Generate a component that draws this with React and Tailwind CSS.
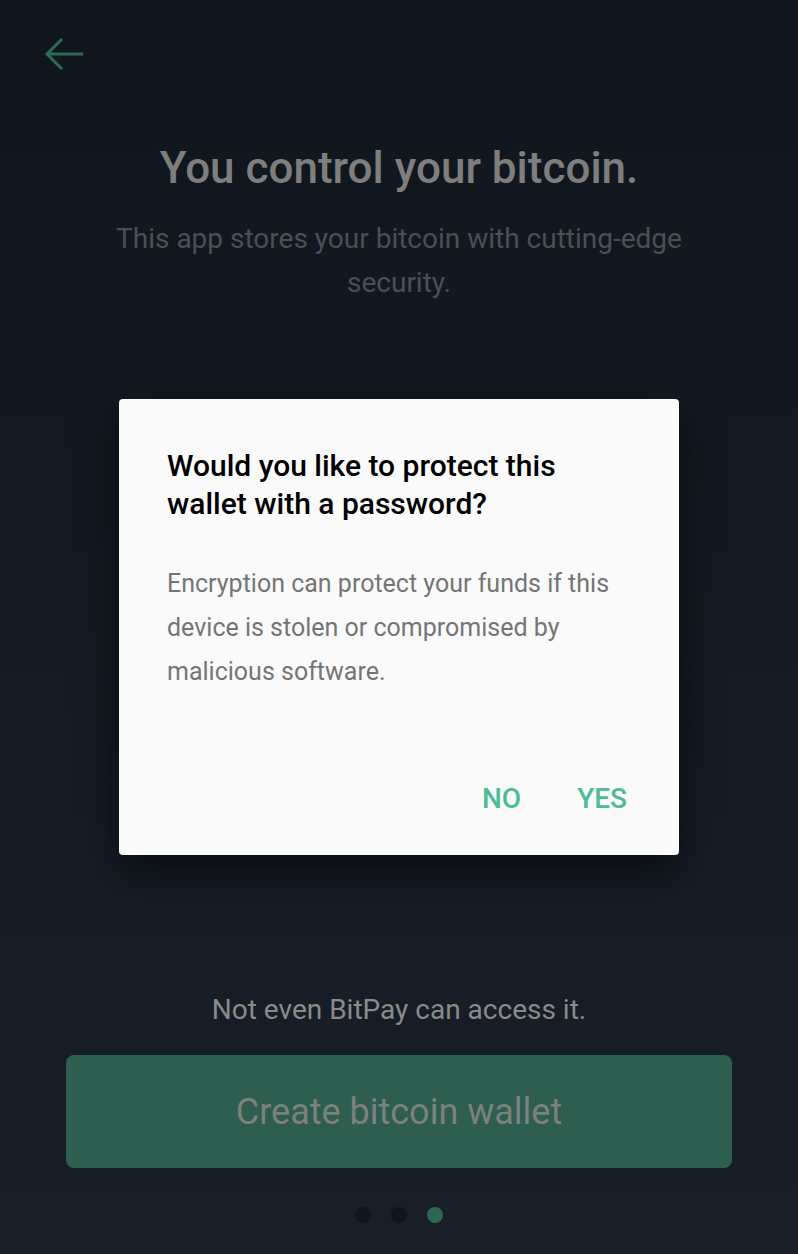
import React from 'react';

export default function App() {
  return (
    <div className="relative w-full h-[1254px] overflow-hidden bg-gradient-to-b from-[#10161e] to-[#181f29] font-['Roboto','Liberation_Sans',sans-serif]">
      <div className="flex flex-col h-full">
        {/* Back arrow */}
        <div className="pt-[37px] pl-[43px]">
          <svg width="42" height="34" viewBox="0 0 42 34" fill="none" stroke="#2d6a55" strokeWidth="3">
            <path d="M40 17H4" />
            <path d="M19 2L4 17l15 15" />
          </svg>
        </div>

        {/* Headline */}
        <h1 className="mt-[71px] text-center text-[44px] leading-[52px] font-medium text-[#7e7e7e]">
          You control your bitcoin.
        </h1>
        <p className="mt-[23px] mx-auto w-[600px] text-center text-[28px] leading-[44px] text-[#4a4f56]">
          This app stores your bitcoin with cutting-edge security.
        </p>

        {/* Bottom area */}
        <div className="mt-auto flex flex-col items-center pb-[31px]">
          <p className="text-[28px] leading-[36px] text-[#8a8a8a]">Not even BitPay can access it.</p>
          <button className="mt-[27px] w-[666px] h-[113px] rounded-lg bg-[#2d5e4f] text-[36px] text-[#7b817e]">
            Create bitcoin wallet
          </button>
          <div className="mt-[39px] flex items-center gap-5">
            <span className="w-4 h-4 rounded-full bg-[#11161e]" />
            <span className="w-4 h-4 rounded-full bg-[#11161e]" />
            <span className="w-4 h-4 rounded-full bg-[#2e6653]" />
          </div>
        </div>
      </div>

      {/* Dialog */}
      <div className="absolute left-[119px] top-[399px] w-[560px] h-[456px] rounded bg-[#fafafa] shadow-[0_18px_40px_rgba(0,0,0,0.55)] flex flex-col">
        <div className="px-12 pt-12">
          <h2 className="text-[30px] leading-[38px] font-medium text-black">
            Would you like to protect this wallet with a password?
          </h2>
          <p className="mt-[39px] text-[25px] leading-[44px] text-[#757575]">
            Encryption can protect your funds if this device is stolen or compromised by malicious software.
          </p>
        </div>
        <div className="mt-auto flex justify-end gap-6 pr-9 pb-8">
          <button className="h-12 px-4 text-[28px] font-medium text-[#4cbb98]">NO</button>
          <button className="h-12 px-4 text-[28px] font-medium text-[#4cbb98]">YES</button>
        </div>
      </div>
    </div>
  );
}
